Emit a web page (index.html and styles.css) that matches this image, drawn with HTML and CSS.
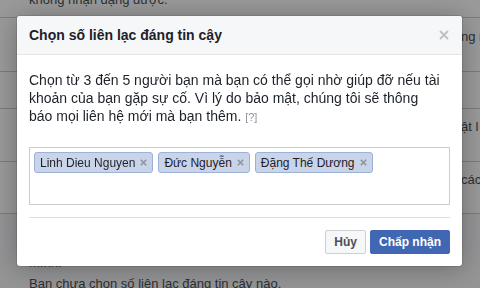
FILE: index.html
```html
<!DOCTYPE html>
<html lang="vi">
<head>
<meta charset="utf-8">
<title>Chọn số liên lạc đáng tin cậy</title>
<link rel="stylesheet" href="styles.css">
</head>
<body>
<div class="page">
  <div class="row row-top"><span class="bg-text">không nhận dạng được.</span></div>
  <div class="row row-a"><span></span><span class="bg-text">ng nhận</span></div>
  <div class="row row-b"></div>
  <div class="row row-c"><span></span><span class="bg-text">ật l</span></div>
  <div class="row row-d"><span></span><span class="bg-text">các</span></div>
  <div class="row row-last">
    <p class="bg-text">mình.</p>
    <p class="bg-text second">Bạn chưa chọn số liên lạc đáng tin cậy nào.</p>
  </div>
</div>

<div class="overlay"></div>

<div class="dialog" role="dialog">
  <div class="dialog-header">
    <h1 class="dialog-title">Chọn số liên lạc đáng tin cậy</h1>
    <span class="close" aria-label="Đóng">
      <svg width="10" height="10" viewBox="0 0 10 10"><path d="M1 1 L9 9 M9 1 L1 9" stroke="#bec2c9" stroke-width="2" fill="none"/></svg>
    </span>
  </div>
  <div class="dialog-body">
    <p class="desc">Chọn từ 3 đến 5 người bạn mà bạn có thể gọi nhờ giúp đỡ nếu tài khoản của bạn gặp sự cố. Vì lý do bảo mật, chúng tôi sẽ thông báo mọi liên hệ mới mà bạn thêm. <span class="help">[?]</span></p>
    <div class="token-box">
      <span class="token">Linh Dieu Nguyen<span class="token-x"><svg width="7" height="7" viewBox="0 0 7 7"><path d="M0.8 0.8 L6.2 6.2 M6.2 0.8 L0.8 6.2" stroke="#8d949e" stroke-width="1.6" fill="none"/></svg></span></span>
      <span class="token">Đức Nguyễn<span class="token-x"><svg width="7" height="7" viewBox="0 0 7 7"><path d="M0.8 0.8 L6.2 6.2 M6.2 0.8 L0.8 6.2" stroke="#8d949e" stroke-width="1.6" fill="none"/></svg></span></span>
      <span class="token">Đặng Thế Dương<span class="token-x"><svg width="7" height="7" viewBox="0 0 7 7"><path d="M0.8 0.8 L6.2 6.2 M6.2 0.8 L0.8 6.2" stroke="#8d949e" stroke-width="1.6" fill="none"/></svg></span></span>
    </div>
    <div class="dialog-footer">
      <button class="btn btn-cancel">Hủy</button>
      <button class="btn btn-primary">Chấp nhận</button>
    </div>
  </div>
</div>
</body>
</html>
```
FILE: styles.css
```css
* { box-sizing: border-box; }
html, body { margin: 0; padding: 0; }
body {
  font-family: "Liberation Sans", Arial, sans-serif;
  background: #ffffff;
  color: #1d2129;
  width: 480px;
  height: 288px;
  overflow: hidden;
}
.page { width: 480px; overflow: hidden; }
.row {
  border-bottom: 1px solid #c9ccd1;
  padding-left: 29px;
  display: grid;
  grid-template-columns: 432px 1fr;
  overflow: hidden;
}
.bg-text {
  color: #4b4f56;
  white-space: nowrap;
  margin: 0;
  font-size: 13px;
  line-height: 16px;
}
.row-top {
  height: 18px;
  display: flex;
  align-items: flex-end;
  padding-bottom: 9px;
  overflow: visible;
}
.row-a { height: 54px; padding-top: 11px; align-items: start; }
.row-b { height: 37px; }
.row-c { height: 53px; padding-top: 10px; align-items: start; }
.row-d { height: 52px; padding-top: 10px; align-items: start; }
.row-last {
  display: block;
  border-bottom: none;
  background: #f6f7f9;
  height: 80px;
  padding-top: 41px;
}
.row-last .second { margin-top: 5px; }

.overlay {
  position: fixed;
  inset: 0;
  background: rgba(0, 0, 0, 0.4);
}

.dialog {
  position: fixed;
  left: 17px;
  top: 16px;
  width: 445px;
  height: 250px;
  background: #ffffff;
  border-radius: 3px;
  box-shadow: 0 2px 26px rgba(0, 0, 0, 0.3), 0 0 0 1px rgba(0, 0, 0, 0.1);
  display: flex;
  flex-direction: column;
}
.dialog-header {
  height: 40px;
  background: #f6f7f9;
  border-bottom: 1px solid #e5e5e5;
  border-radius: 3px 3px 0 0;
  padding: 0 13px 0 12px;
  display: flex;
  align-items: center;
  justify-content: space-between;
}
.dialog-title {
  margin: 0;
  font-size: 14px;
  font-weight: bold;
  color: #1d2129;
  line-height: 19px;
}
.close { display: flex; width: 10px; height: 10px; }

.dialog-body {
  padding: 16px 12px 12px 12px;
  display: flex;
  flex-direction: column;
}
.desc {
  margin: 0 7px 0 0;
  font-size: 14px;
  line-height: 18px;
  color: #1d2129;
}
.help { font-size: 11px; color: #90949c; }

.token-box {
  margin-top: 21px;
  height: 58px;
  border: 1px solid #cccccc;
  padding: 4px;
  display: flex;
  flex-wrap: wrap;
  align-content: flex-start;
  gap: 5px;
}
.token {
  display: inline-flex;
  align-items: center;
  height: 21px;
  padding: 0 5px;
  background: #cad4e9;
  border: 1px solid #9db2d8;
  border-radius: 3px;
  font-size: 12px;
  color: #1d2129;
  white-space: nowrap;
}
.token-x { display: inline-flex; margin-left: 5px; }

.dialog-footer {
  margin-top: 12px;
  border-top: 1px solid #dddfe2;
  padding-top: 12px;
  display: flex;
  justify-content: flex-end;
  gap: 4px;
}
.btn {
  font-family: "Liberation Sans", Arial, sans-serif;
  font-size: 12px;
  font-weight: bold;
  height: 24px;
  line-height: 22px;
  padding: 0 8px;
  border-radius: 2px;
  cursor: pointer;
}
.btn-cancel {
  background: #f6f7f9;
  border: 1px solid #ced0d4;
  color: #4b4f56;
}
.btn-primary {
  background: #4267b2;
  border: 1px solid #4267b2;
  color: #ffffff;
}
```
